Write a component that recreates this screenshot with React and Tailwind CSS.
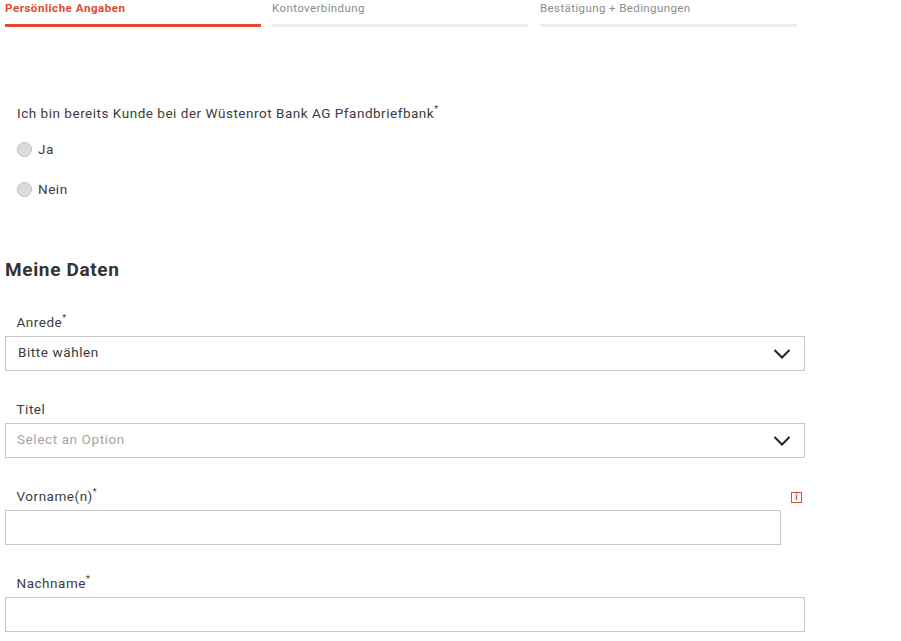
import React from 'react';

const Req = () => <sup className="text-[9px] leading-none relative top-[-1px] align-super">*</sup>;

const Chevron = () => (
  <svg className="w-[18px] h-[12px]" viewBox="0 0 18 12" fill="none" stroke="#222" strokeWidth="2">
    <path d="M1.5 2 L9 9.5 L16.5 2" />
  </svg>
);

const Tab = ({ label, active, className }) => (
  <div className={className}>
    <div className={`h-[24px] pt-[1px] text-[11.5px] leading-[15px] ${active ? 'font-bold text-[#e2492f] tracking-[0.55px]' : 'text-[#8c8c8c] tracking-[0.4px]'}`}>{label}</div>
    <div className={active ? 'h-[3px] bg-[#e2492f]' : 'h-[3px] bg-[#eeeeee]'}></div>
  </div>
);

const Radio = ({ label }) => (
  <div className="flex items-center h-[20px] pl-[17px]">
    <span className="w-[15px] h-[15px] rounded-full bg-[#dcdcdc] border border-[#bdbdbd]"></span>
    <span className="ml-[6px]">{label}</span>
  </div>
);

const Select = ({ label, req, value, placeholder }) => (
  <div className="h-[87px]">
    <div className="h-[22px] pl-[11.5px] leading-[16px]">{label}{req && <Req />}</div>
    <div className="h-[35px] border border-[#c6c6c6] flex items-center justify-between pl-[12px] pr-[13px]">
      <span className={placeholder ? 'text-[#a5a5a5] -ml-px mb-[2px] tracking-[0.6px]' : 'mb-[2px] tracking-[0.58px]'}>{value}</span>
      <Chevron />
    </div>
  </div>
);

export default function App() {
  return (
    <div className="w-[901px] h-[641px] overflow-hidden bg-white text-[#3c3c3c] text-[13.5px] tracking-[0.52px] font-['Roboto','Liberation_Sans',sans-serif]">
      <div className="flex pl-[5px]">
        <Tab label="Persönliche Angaben" active className="w-[256px]" />
        <Tab label="Kontoverbindung" className="w-[256px] ml-[11px]" />
        <Tab label="Bestätigung + Bedingungen" className="w-[257px] ml-[12px]" />
      </div>

      <div className="pt-[76px] pl-[17px] h-[20px] leading-[20px] box-content">
        Ich bin bereits Kunde bei der Wüstenrot Bank AG Pfandbriefbank<Req />
      </div>
      <div className="mt-[16px] flex flex-col gap-[20px]">
        <Radio label="Ja" />
        <Radio label="Nein" />
      </div>

      <h2 className="mt-[59px] pl-[5px] text-[19px] leading-[24px] font-bold tracking-[0.65px] text-[#333]">Meine Daten</h2>

      <div className="mt-[32px] pl-[5px] w-[805px]">
        <Select label="Anrede" req value="Bitte wählen" />
        <Select label="Titel" value="Select an Option" placeholder />

        <div className="h-[87px]">
          <div className="h-[22px] flex justify-between items-start pl-[11.5px] pr-[3px] leading-[16px]">
            <span>Vorname(n)<Req /></span>
            <span className="mt-[4px] w-[11px] h-[11px] border border-[#e2492f] text-[#e2492f] text-[9px] leading-[9px] text-center tracking-normal font-bold">i</span>
          </div>
          <div className="h-[35px] w-[776px] border border-[#c6c6c6]"></div>
        </div>

        <div>
          <div className="h-[22px] pl-[11.5px] leading-[16px]">Nachname<Req /></div>
          <div className="h-[35px] border border-[#c6c6c6]"></div>
        </div>
      </div>
    </div>
  );
}
